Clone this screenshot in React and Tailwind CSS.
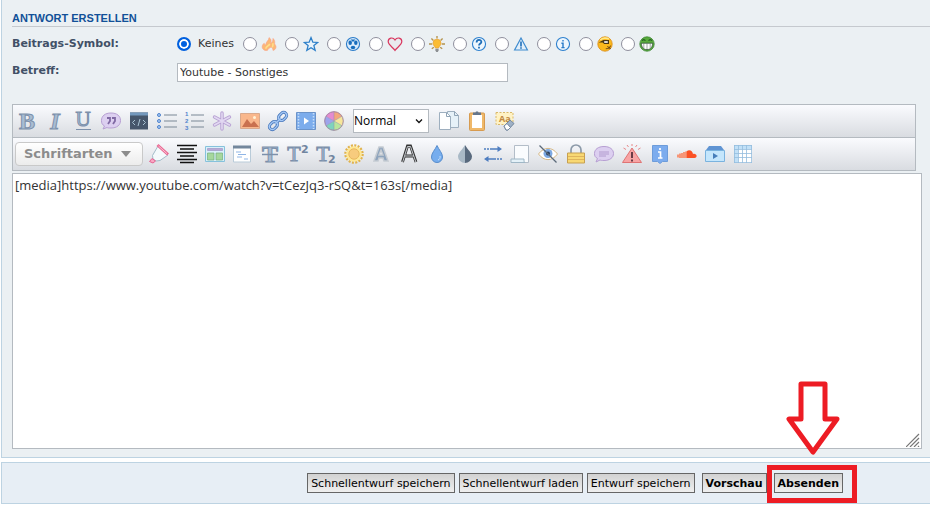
import React from 'react';

function Icon({ children }) {
  return (
    <svg viewBox="-4 -4 28 28" className="h-7 w-7 shrink-0" fill="none" aria-hidden="true">
      {children}
    </svg>
  );
}

function Letter({ children, x = 10, y = 17, size = 21, fill = '#a9bdd3', stroke = '#7c90ab', ...rest }) {
  return (
    <text
      x={x}
      y={y}
      fontSize={size}
      textAnchor="middle"
      fill={fill}
      stroke={stroke}
      strokeWidth="1"
      fontFamily="Liberation Serif, serif"
      {...rest}
    >
      {children}
    </text>
  );
}

const topicIcons = [
  {
    name: 'Feuer',
    icon: (
      <>
        <path d="M5 18C0 16 1 11 4 9c0 1 1 2 2 2 0-4 4-5 4-9 3 2 3 4 2 7 2-1 3-3 3-6 3 3 2 5 2 7 3 3 2 7-2 8 0-2-1-3-2-4-2 0-4 2-5 4Z" fill="#fbb877" stroke="#f9a38a" strokeWidth="0.800" />
        <path d="M6 16c0-3 3-3 5-6M14 14c1-1 1-3 1-5" stroke="#ffe08a" strokeWidth="2" />
      </>
    ),
  },
  {
    name: 'Stern',
    icon: <path d="m10 2 2.300 5.800 6 .300-4.700 3.900 1.600 6-5.200-3.400L4.800 18l1.600-6-4.700-3.900 6-.300Z" fill="#e8f3fb" stroke="#2c7fc9" strokeWidth="1.600" />,
  },
  {
    name: 'Alien',
    icon: (
      <>
        <circle cx="10" cy="10" r="8.200" fill="#d9eafa" stroke="#2b7cc9" strokeWidth="1.400" />
        <ellipse cx="6.500" cy="8.500" rx="2.200" ry="2.800" fill="#176dbd" />
        <ellipse cx="13.500" cy="8.500" rx="2.200" ry="2.800" fill="#176dbd" />
        <path d="M7 4.500h6l-3 3Z" fill="#176dbd" />
        <ellipse cx="10" cy="14.300" rx="2.800" ry="2.200" fill="#176dbd" />
      </>
    ),
  },
  {
    name: 'Herz',
    icon: <path d="M10 18C7 14 1.500 11 1.500 7c0-5 6-6 8.500-2 2.500-4 8.500-3 8.500 2 0 4-5.500 7-8.500 11Z" fill="#e9eaee" stroke="#d9365e" strokeWidth="1.500" />,
  },
  {
    name: 'Idee',
    icon: (
      <>
        <path d="M10 0v3M3 3l2.500 2.500M17 3l-2.500 2.500M0 10h4M16 10h4M3.500 16 6 14M16.500 16 14 14" stroke="#b4934e" strokeWidth="1.700" />
        <path d="M8 15c0-2-3-3-3-6a5 5 0 0 1 10 0c0 3-3 4-3 6Z" fill="#fbbc32" stroke="#eaa435" />
        <path d="M8 16h4v2l-1 2H9l-1-2Z" fill="#8c8f92" />
      </>
    ),
  },
  {
    name: 'Frage',
    icon: (
      <>
        <circle cx="10" cy="10" r="8.200" fill="#edf6fd" stroke="#2d80ce" strokeWidth="1.400" />
        <path d="M7 8c0-4 6-4 6-.5 0 2-3 2-3 4.500M10 13.500v2" stroke="#1f6fb9" strokeWidth="2.200" />
      </>
    ),
  },
  {
    name: 'Achtung',
    icon: (
      <>
        <path d="M10 2.500 18 17.500H2Z" fill="#e2effa" stroke="#3f8ccf" strokeWidth="1.500" />
        <path d="M10 7v6M10 14v2" stroke="#1f6fb9" strokeWidth="2" />
      </>
    ),
  },
  {
    name: 'Info',
    icon: (
      <>
        <circle cx="10" cy="10" r="8.200" fill="#edf6fd" stroke="#2d80ce" strokeWidth="1.400" />
        <path d="M10 5v2M8 9h2v5.500M8 14.500h4" stroke="#2b7cc9" strokeWidth="1.800" />
      </>
    ),
  },
  {
    name: 'Skeptisch',
    icon: (
      <>
        <circle cx="10" cy="10" r="9" fill="#fbb81c" stroke="#d98910" />
        <path d="M4 5c3-3 8-3 11-1" stroke="#ffe98a" strokeWidth="2" />
        <path d="M2 8 8 5h7v5H9L7 8Z" fill="#4a3715" />
        <path d="M9 6.500h4.500v2H9Z" fill="#fff" />
        <path d="M11 16c3 0 5-1 6-4M13 13l4 3" stroke="#6b4715" strokeWidth="1.300" />
      </>
    ),
  },
  {
    name: 'Grinsen',
    icon: (
      <>
        <circle cx="10" cy="10" r="9" fill="#58aa3c" stroke="#3c8632" />
        <path d="M4 6c1-2 3-2 4 0m4 0c1-2 3-2 4 0" stroke="#235f23" strokeWidth="1.500" />
        <path d="M3 9h14c0 4-2 8-7 8S3 13 3 9Z" fill="#fff" stroke="#33503b" />
        <path d="M6 9v6M10 9v8M14 9v6" stroke="#6a7770" strokeWidth="0.800" />
      </>
    ),
  },
];

const formatTools = [
  { name: 'Fett', icon: <Letter fontWeight="bold" size={24} y={18}>B</Letter> },
  { name: 'Kursiv', icon: <Letter fontStyle="italic" fontWeight="bold" size={24} y={18}>I</Letter> },
  {
    name: 'Unterstrichen',
    icon: (
      <>
        <Letter size={21} y={15}>U</Letter>
        <path d="M3 18.500h15" stroke="#7c90ab" />
      </>
    ),
  },
  {
    name: 'Zitat',
    icon: (
      <>
        <path d="M10 2c6 0 9.500 3 9.500 7.500S16 17 10 17c-2 0-3 0-4-.5L2 18l1.500-3C1 13.500.5 12 .5 9.500.5 5 4 2 10 2Z" fill="#dccff0" stroke="#b79fd3" />
        <path d="M6 7h3v3l-2 3M11 7h3v3l-2 3" stroke="#8069a4" strokeWidth="1.800" />
      </>
    ),
  },
  {
    name: 'Code',
    icon: (
      <>
        <path d="M1 1.500h18v17H1Z" fill="#46566b" />
        <path d="M1 1.500h18v3H1Z" fill="#7398bd" />
        <path d="M6 9l-2.500 2.500L6 14m8-5 2.500 2.500L14 14m-3-6-2 7" stroke="#a9c3d3" />
      </>
    ),
  },
  {
    name: 'Liste',
    icon: (
      <>
        <path d="M7 4h13M7 10h13M7 16h13" stroke="#7b8796" strokeWidth="1.200" />
        <g fill="#a9caf5" stroke="#4f82cc">
          <circle cx="2" cy="4" r="1.500" />
          <circle cx="2" cy="10" r="1.500" />
          <circle cx="2" cy="16" r="1.500" />
        </g>
      </>
    ),
  },
  {
    name: 'Nummerierte Liste',
    icon: (
      <>
        <path d="M6 4h13M6 10h13M6 16h13" stroke="#7b8796" strokeWidth="1.200" />
        <g fill="#4f82cc" fontSize="6" fontWeight="bold" fontFamily="Liberation Sans, sans-serif">
          <text x="0" y="5">1</text>
          <text x="0" y="12">2</text>
          <text x="0" y="19">3</text>
        </g>
      </>
    ),
  },
  {
    name: 'Listenpunkt',
    icon: (
      <>
        <path d="M10 2v16M2.500 6l15 8M17.500 6l-15 8" stroke="#b7a1d3" strokeWidth="3.400" strokeLinecap="round" />
        <path d="M10 2v16M2.500 6l15 8M17.500 6l-15 8" stroke="#e2d8f2" strokeWidth="1.600" strokeLinecap="round" />
      </>
    ),
  },
  {
    name: 'Bild',
    icon: (
      <>
        <path d="M.5 2.500h19v15H.5Z" fill="#f9b78c" stroke="#d9a98c" />
        <path d="m2 16 5-8 4 5 3-3 5 6Z" fill="#c9714f" />
        <circle cx="14.500" cy="6.500" r="1.500" fill="#fff3d8" />
      </>
    ),
  },
  {
    name: 'Link',
    icon: (
      <g transform="rotate(-45 10 10)">
        <g stroke="#4a79bd" strokeWidth="3">
          <rect x="-1" y="7" width="9" height="6" rx="3" />
          <rect x="12" y="7" width="9" height="6" rx="3" />
          <path d="M6 10h8" />
        </g>
        <g stroke="#a5c8f5" strokeWidth="1.300">
          <rect x="-1" y="7" width="9" height="6" rx="3" />
          <rect x="12" y="7" width="9" height="6" rx="3" />
          <path d="M6 10h8" />
        </g>
      </g>
    ),
  },
  {
    name: 'Film',
    icon: (
      <>
        <path d="M.5 1.500h19v17H.5Z" fill="#7cacec" stroke="#6b93c9" />
        <path d="M2.500 2v16M17.500 2v16" stroke="#c7def8" strokeWidth="1.500" strokeDasharray="1.500 1.500" />
        <path d="M8 6.500v7l5-3.500Z" fill="#fff" />
      </>
    ),
  },
  {
    name: 'Farbe',
    icon: (
      <>
        <path d="M10 10V.5A9.500 9.500 0 0 1 18.200 5.200Z" fill="#f3a77d" />
        <path d="m10 10 8.200-4.800a9.500 9.500 0 0 1 0 9.600Z" fill="#f7e69a" />
        <path d="m10 10 8.200 4.800A9.500 9.500 0 0 1 10 19.500Z" fill="#b9e69c" />
        <path d="M10 10v9.500a9.500 9.500 0 0 1-8.200-4.700Z" fill="#7ed3bd" />
        <path d="m10 10-8.200 4.800a9.500 9.500 0 0 1 0-9.600Z" fill="#9da4ec" />
        <path d="M10 10 1.800 5.200A9.500 9.500 0 0 1 10 .5Z" fill="#e58bd0" />
        <path d="M10 .5v19M1.800 5.200l16.400 9.600M18.200 5.200 1.800 14.800" stroke="#8f8fae" strokeWidth="0.500" />
        <circle cx="10" cy="10" r="9.300" stroke="#a389a4" />
      </>
    ),
  },
];

const clipboardTools = [
  {
    name: 'Kopieren',
    icon: (
      <>
        <path d="M8.500.5h7l4 4v12h-11Z" fill="#e6f1f8" stroke="#9eafbf" />
        <path d="M15.500.5v4h4" stroke="#8fa3b5" />
        <path d="M.5 1.500h7l4 4v13H.5Z" fill="#fff" stroke="#9eafbf" />
        <path d="M7.500 1.500v4h4" stroke="#8fa3b5" />
      </>
    ),
  },
  {
    name: 'Einfügen',
    icon: (
      <>
        <rect x="2.500" y="2" width="15" height="17.500" rx="1" fill="#efb869" stroke="#d79b50" />
        <path d="M5 4h10v13H5Z" fill="#fff" />
        <path d="M6 1.500h2.500l.5-1h2l.5 1H14v2.500H6Z" fill="#65768c" />
      </>
    ),
  },
  {
    name: 'Formatierung entfernen',
    icon: (
      <>
        <path d="M1 1.500h17v12H1Z" fill="#fff2c4" stroke="#d9b869" strokeDasharray="2 1.500" />
        <text x="4" y="11" fontSize="9" fontWeight="bold" fill="#c18a43" fontFamily="Open Sans, sans-serif">Aa</text>
        <path d="m9 15 6-6 4 3.500-6 6.500H11Z" fill="#9fb1c7" stroke="#73879f" />
        <path d="m9 15 3-2.500 3.500 4L13 19h-2Z" fill="#fff" stroke="#73879f" />
      </>
    ),
  },
];

const extraTools = [
  {
    name: 'Hervorheben',
    icon: (
      <>
        <path d="M9 2 3.500 11.500 4 15l3 2 4-.5L19 11Z" fill="#f4fafc" stroke="#a3bcc9" />
        <path d="M8.500 1 19 10.500" stroke="#ea6b95" strokeWidth="3" />
        <path d="M9.500 2 18 9.700" stroke="#fbc3d5" />
        <path d="m.5 17.500 2.500-3 3.500 2.500-2.500 2Z" fill="#f9a7c3" stroke="#e66492" />
      </>
    ),
  },
  {
    name: 'Zentriert',
    icon: <path d="M0 1.500h20M3 5h14M0 8.500h20M3 12h14M0 15.500h20M3 18.500h14" stroke="#111" strokeWidth="1.600" />,
  },
  {
    name: 'Spalten',
    icon: (
      <>
        <path d="M.5 2.500h19v15H.5Z" fill="#d9effa" stroke="#86c2dc" />
        <path d="M2.500 4.500h15v2h-15Z" fill="#b9a9d6" stroke="#8f83b8" strokeWidth="0.500" />
        <path d="M2.500 9h6.500v7H2.500Zm8.500 0h6.500v7H11Z" fill="#a6d79d" stroke="#73af7c" strokeWidth="0.700" />
      </>
    ),
  },
  {
    name: 'Fenster',
    icon: (
      <>
        <path d="M1.500 2.500h17v15.500h-17Z" fill="#fff" stroke="#b9cbd9" />
        <path d="M1 1.500h18v3H1Z" fill="#73879c" />
        <path d="M4 8h5M6 10.500h8M5 13h5M12 15h4" stroke="#8fb5e6" />
      </>
    ),
  },
  {
    name: 'Durchgestrichen',
    icon: (
      <>
        <Letter fontWeight="bold" size={24} y={18}>T</Letter>
        <path d="M2 10.500h16" stroke="#7c90ab" strokeWidth="1.500" />
      </>
    ),
  },
  {
    name: 'Hochgestellt',
    icon: (
      <>
        <Letter x={6} size={22}>T</Letter>
        <text x="13" y="9" fontSize="11" fontWeight="bold" fill="#7185a0" fontFamily="DejaVu Sans, sans-serif">2</text>
      </>
    ),
  },
  {
    name: 'Tiefgestellt',
    icon: (
      <>
        <Letter x={7} size={22}>T</Letter>
        <text x="12" y="19" fontSize="11" fontWeight="bold" fill="#7185a0" fontFamily="DejaVu Sans, sans-serif">2</text>
      </>
    ),
  },
  {
    name: 'Leuchten',
    icon: (
      <>
        <circle cx="10" cy="10" r="8.500" stroke="#e0b24c" strokeWidth="2.500" strokeDasharray="2 1.338" />
        <circle cx="10" cy="10" r="7.800" fill="#ffe894" />
        <circle cx="10" cy="10" r="5.200" fill="#f7cb7d" stroke="#e8b85f" />
      </>
    ),
  },
  {
    name: 'Schatten',
    icon: <path d="m3 17 5-14h4l5 14h-4l-1-3H8l-1 3Zm5-6h4l-2-5Z" fill="#8ea4bd" stroke="#c5cbd2" strokeWidth="1.500" />,
  },
  {
    name: 'Kontur',
    icon: (
      <>
        <path d="m3.500 18 5-16h3l5.500 16M6 12h9" stroke="#333" strokeWidth="2.800" />
        <path d="m3.500 18.500 5-16h3l5.500 16M6 12h9" stroke="#d5d9df" strokeWidth="0.900" />
      </>
    ),
  },
  {
    name: 'Weichzeichnen',
    icon: (
      <>
        <path d="M10 1.500C8 6 4.500 9 4.500 13a5.500 5.500 0 0 0 11 0c0-4-3.500-7-5.500-11.500Z" fill="#76adee" stroke="#588dcc" />
        <path d="M13 12c.5 2-.5 3.500-2 4" stroke="#c5e0fb" />
      </>
    ),
  },
  {
    name: 'Kontrast',
    icon: (
      <>
        <path d="M10 1C7 6 3 9 3 12.500a7 6.500 0 0 0 7 6.500Z" fill="#a9b9c6" />
        <path d="M10 1c3 5 7 8 7 11.500a7 6.500 0 0 1-7 6.500Z" fill="#58697d" />
      </>
    ),
  },
  {
    name: 'Lauftext',
    icon: (
      <>
        <path d="M1 5h2M4 5h2M7 5h9M4 15h9M14 15h2M17 15h2" stroke="#4e7dc0" strokeWidth="1.500" />
        <path d="m14.500 2 4.500 3-4.500 3ZM5.500 12 1 15l4.500 3Z" fill="#4e7dc0" />
      </>
    ),
  },
  {
    name: 'Spoiler',
    icon: (
      <>
        <path d="M4.500 1.500h14v17h-14Z" fill="#fafcfe" stroke="#b3bdc8" />
        <path d="M1 15h13v2c0 1 1 1.500 1 1.500H1Z" fill="#e4f1f8" stroke="#9fb7c6" />
      </>
    ),
  },
  {
    name: 'Verstecken',
    icon: (
      <>
        <path d="M.5 10C6 2.500 14 2.500 19.500 10 14 17.500 6 17.500.5 10Z" fill="#fff" stroke="#d6b886" />
        <circle cx="10" cy="9.500" r="4.500" fill="#7da9e3" />
        <circle cx="10" cy="9.500" r="2" fill="#263b5c" />
        <path d="m1.500 1.500 17 17" stroke="#5b6a7a" strokeWidth="1.200" />
      </>
    ),
  },
  {
    name: 'Sperren',
    icon: (
      <>
        <path d="M5 9V6a5 5 0 0 1 10 0v3" stroke="#8c9aa9" strokeWidth="1.700" />
        <path d="M1.500 9h17v10h-17Z" fill="#f8d873" stroke="#c7a051" />
        <path d="M2 12.500h16M2 15.500h16" stroke="#dfb45c" />
      </>
    ),
  },
  {
    name: 'Kommentar',
    icon: (
      <>
        <path d="M10 2.500c6 0 9.500 3 9.500 7S16 16.500 10 16.500c-2 0-3 0-4-.5l-4 2 1.500-3.500C1 13 .5 12 .5 9.500c0-4 3.500-7 9.500-7Z" fill="#dccff0" stroke="#b79fd3" />
        <path d="M5 8h10M5 10h10M5 12h7" stroke="#a68dc5" strokeWidth="0.800" />
      </>
    ),
  },
  {
    name: 'Warnung',
    icon: (
      <>
        <path d="M10 4 19.500 18.500H.5Z" fill="#f7a4a4" stroke="#df7474" />
        <path d="M10 8v6M10 15.500v2" stroke="#693c46" strokeWidth="2" />
        <path d="M10 0v2M5 1l1.500 2M15 1l-1.500 2M1.500 4 4 5.500M18.500 4 16 5.500" stroke="#e88888" />
      </>
    ),
  },
  {
    name: 'Hinweis',
    icon: (
      <>
        <path d="M2.500 1.500h15v16h-5L10 19.500l-2.500-2h-5Z" fill="#7cacee" stroke="#6d9cda" />
        <path d="M10 4v2M8 8h2.500v6M8 14h4.500" stroke="#fff" strokeWidth="1.700" />
      </>
    ),
  },
  {
    name: 'SoundCloud',
    icon: (
      <>
        <path d="M9.500 14V7.500C12 5 15.500 6.500 16 10c4-1 5 4 1.500 4Z" fill="#fb5124" />
        <path d="M1 10.500v3M3 9.500V14M5 9v5M7 8v6M9 7.500V14" stroke="#fb7a50" strokeWidth="1.500" />
      </>
    ),
  },
  {
    name: 'Medien',
    icon: (
      <>
        <path d="M4 2h12l3 4H1Z" fill="#5f94d3" />
        <path d="M.5 6.500h19v11H.5Z" fill="#c4e6fc" stroke="#7ab3df" />
        <path d="M8 9v6l5-3Z" fill="#467eba" />
      </>
    ),
  },
  {
    name: 'Tabelle',
    icon: (
      <>
        <path d="M1 1h18v18H1Z" fill="#fff" />
        <path d="M1 1h18v4H5v14H1Z" fill="#c1e0f7" />
        <path d="M1.500 1v18M5.500 1v18M9.500 1v18M13.500 1v18M18.500 1v18M1 1.500h18M1 5.500h18M1 9.500h18M1 13.500h18M1 18.500h18" stroke="#94bddd" strokeWidth="0.800" />
      </>
    ),
  },
];

const drafts = ['Schnellentwurf speichern', 'Schnellentwurf laden', 'Entwurf speichern'];

function ToolButton({ tool, className }) {
  return (
    <button type="button" title={tool.name} aria-label={tool.name} className={`flex min-w-0 items-center justify-center ${className}`}>
      <Icon>{tool.icon}</Icon>
    </button>
  );
}

const radioClass =
  'h-[14px] w-[14px] shrink-0 appearance-none rounded-full border border-[#8f8f9d] bg-white checked:border-2 checked:border-[#0060df] checked:bg-[#0060df] checked:shadow-[inset_0_0_0_2px_white]';

const submitClass =
  'h-5 border border-[#666] bg-linear-to-b from-[#d2d2d2] to-[#efefef] px-[3px] text-[11px] leading-5 whitespace-nowrap text-black';

export default function App() {
  return (
    <form
      className="flex flex-col gap-1 overflow-hidden bg-white pl-px font-['DejaVu_Sans',sans-serif] text-[11px] text-[#333]"
      onSubmit={(e) => e.preventDefault()}
    >
      <section className="border-b border-l border-[#bdd3e2] bg-[#ebf0f3] pr-2 pb-2 pl-[10px]">
        <h3 className="-mr-2 border-b border-[#c5c9ce] pt-[10px] font-['Liberation_Sans',sans-serif] text-[11px] leading-4 font-bold text-[#115098]">
          ANTWORT ERSTELLEN
        </h3>

        <fieldset className="flex h-[34px] items-center">
          <legend className="float-left w-[165px] font-bold text-[#425067]">Beitrags-Symbol:</legend>
          <label className="flex w-[66px] items-center gap-[7px]">
            <input type="radio" name="icon" defaultChecked className={radioClass} />
            <span>Keines</span>
          </label>
          {topicIcons.map((topic) => (
            <label key={topic.name} className="flex w-[42px] items-center gap-1">
              <input type="radio" name="icon" aria-label={topic.name} className={radioClass} />
              <svg viewBox="0 0 20 20" className="h-4 w-4" fill="none" aria-hidden="true">
                {topic.icon}
              </svg>
            </label>
          ))}
        </fieldset>

        <div className="flex items-start">
          <label htmlFor="subject" className="w-[165px] pt-[2px] font-bold text-[#425067]">
            Betreff:
          </label>
          <input
            id="subject"
            type="text"
            defaultValue="Youtube - Sonstiges"
            className="mt-[2px] h-[19px] w-[331px] border border-[#b4bac0] bg-white px-[2px] text-[11px]"
          />
        </div>

        <div className="mt-[22px] mr-[6px] border border-[#b4bac0]">
          <div className="flex h-[33px] items-center border-b border-[#b4bac0] bg-linear-to-b from-[#fafbfe] to-[#d9dce1]">
            <div className="flex w-[335px]">
              {formatTools.map((tool) => (
                <ToolButton key={tool.name} tool={tool} className="flex-1" />
              ))}
            </div>
            <div className="relative ml-[5px]">
              <select
                aria-label="Schriftgröße"
                defaultValue="Normal"
                className="h-6 w-[76px] appearance-none border border-[#b4bac0] bg-white font-['Open_Sans',sans-serif] text-[12px] text-black"
              >
                <option>Normal</option>
              </select>
              <svg viewBox="0 0 8 8" className="pointer-events-none absolute top-2 right-[6px] h-2 w-2" fill="none">
                <path d="m1 2.500 3 3 3-3" stroke="#111" strokeWidth="1.300" />
              </svg>
            </div>
            <div className="ml-[6px] flex">
              {clipboardTools.map((tool) => (
                <ToolButton key={tool.name} tool={tool} className="w-7" />
              ))}
            </div>
          </div>
          <div className="flex h-8 items-center gap-[2px] bg-linear-to-b from-[#fafbfe] to-[#d9dce1] pl-[2px]">
            <button
              type="button"
              className="flex h-6 w-32 items-center gap-2 rounded border border-[#c9c9c9] bg-linear-to-b from-white to-[#ececec] pl-2 text-[13px] font-bold text-[#8c8c8c]"
            >
              Schriftarten
              <svg viewBox="0 0 10 6" className="h-[6px] w-[10px]">
                <path d="M0 0h10L5 6Z" fill="#8c8c8c" />
              </svg>
            </button>
            <div className="flex w-[612px]">
              {extraTools.map((tool) => (
                <ToolButton key={tool.name} tool={tool} className="flex-1" />
              ))}
            </div>
          </div>
        </div>

        <div className="relative mt-[2px]">
          <textarea
            aria-label="Nachricht"
            spellCheck={false}
            defaultValue="[media]https://www.youtube.com/watch?v=tCezJq3-rSQ&t=163s[/media]"
            className="block h-[276px] w-full resize-none border border-[#b4bac0] bg-white px-[2px] py-[2px] font-['Open_Sans',sans-serif] text-[13px] leading-[18px] text-[#333]"
          />
          <svg viewBox="0 0 14 14" className="pointer-events-none absolute right-[2px] bottom-[2px] h-[14px] w-[14px]">
            <path d="M0 14 13 1M4 14l9-9M8 14l5-5M12 14l1-1" stroke="#777" strokeWidth="1.200" />
          </svg>
        </div>
      </section>

      <section className="flex h-[42px] items-center justify-end gap-1 border-y border-l border-[#bdd3e2] bg-[#e7eef5] pr-[87px]">
        {drafts.map((label) => (
          <button key={label} type="button" className={submitClass}>
            {label}
          </button>
        ))}
        <button type="button" className={`${submitClass} ml-[3px] font-bold`}>
          Vorschau
        </button>
        <div className="relative ml-[3px] flex">
          <button type="submit" className={`${submitClass} font-bold`}>
            Absenden
          </button>
          <div className="pointer-events-none absolute -top-2 -right-[14px] -bottom-[10px] -left-[7px] border-[5px] border-[#ed1c24]" />
          <svg viewBox="0 0 54 76" className="pointer-events-none absolute bottom-[37px] left-3 h-[76px] w-[54px]" fill="none">
            <path d="M15 4h24v35h12L27 72 3 39h12Z" stroke="#ed1c24" strokeWidth="5" strokeLinejoin="round" />
          </svg>
        </div>
      </section>
    </form>
  );
}
